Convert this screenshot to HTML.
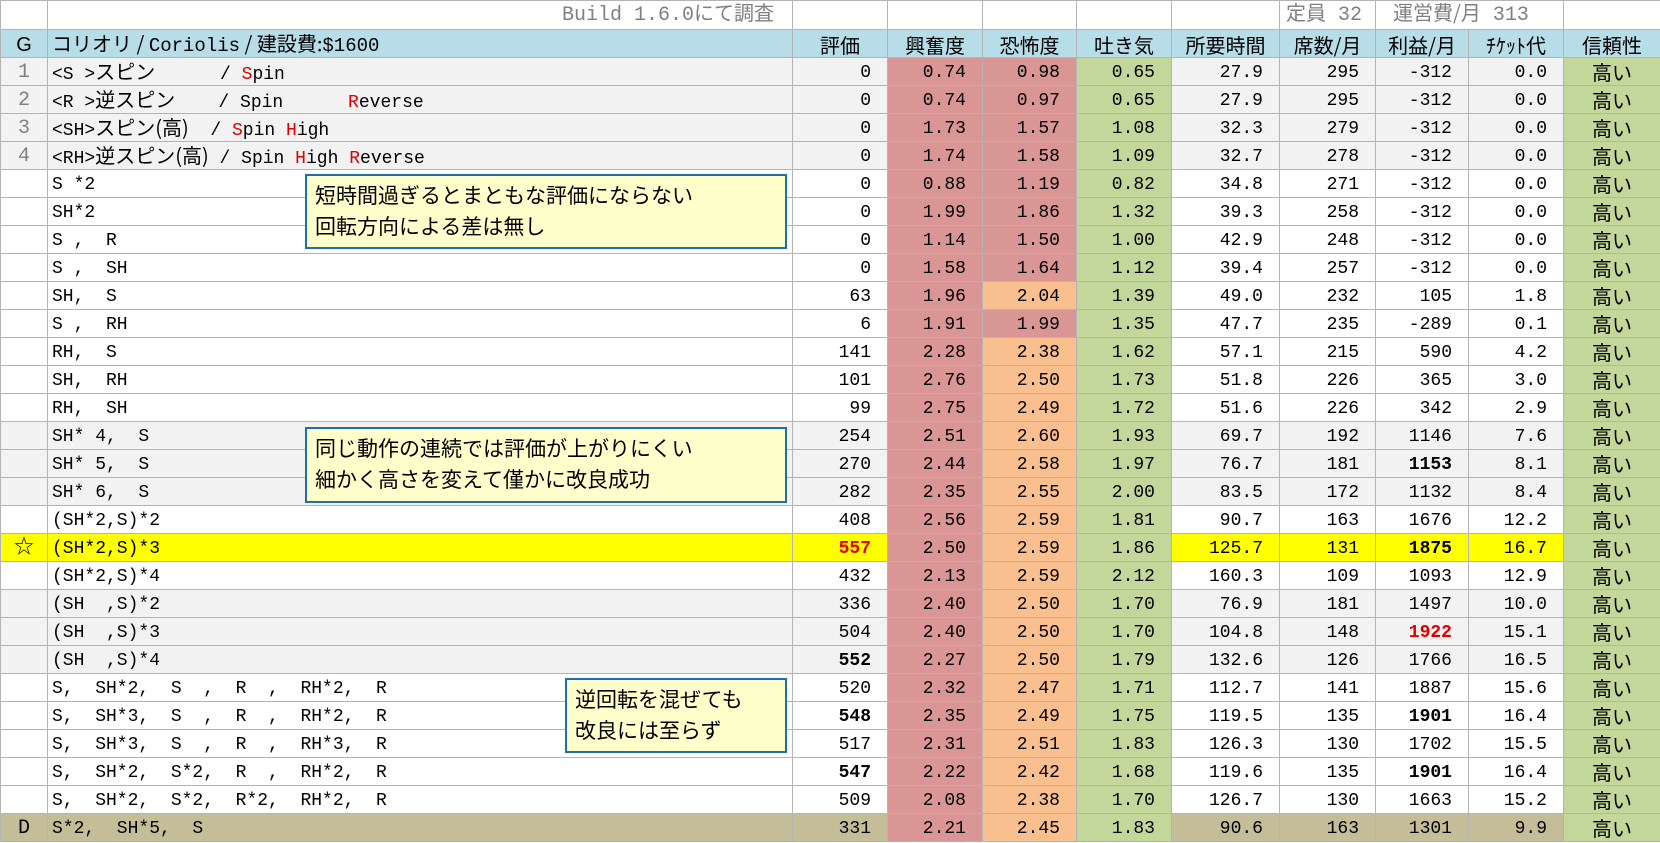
<!DOCTYPE html>
<html><head><meta charset="utf-8"><style>
*{margin:0;padding:0;box-sizing:border-box}
body{width:1660px;height:843px;background:#fff;overflow:hidden;position:relative;font-family:"Liberation Mono","Noto Sans CJK JP",monospace;font-size:18px;color:#000}
table{border-collapse:collapse;table-layout:fixed;position:absolute;left:0;top:0;width:1660px}
td{border:1px solid #b4b4b4;height:28px;white-space:pre;overflow:hidden;padding:3px 16px 0 0;line-height:20px;text-align:right;vertical-align:middle}
tr.h0 td{height:29px}
td.g{text-align:center;padding:2px 0 0 0;color:#808080;font-size:20px}
td.n{text-align:left;padding-left:4px;padding-right:0;overflow:visible}
.j{font-family:"Noto Sans CJK JP",sans-serif;font-size:20px;line-height:20px}
tr.hd td{background:#b7dde8;text-align:center;padding:2px 0 0 0;font-family:"Noto Sans CJK JP",sans-serif;font-size:20px}
tr.hd td.n{text-align:left;padding-left:4px}
tr.gr td{background:#f2f2f2}
tr.y td{background:#ffff00}
tr.d td{background:#c4bd97}
tr td.r{background:#da9694}
tr td.o{background:#fabf8f}
tr td.gn{background:#c4d79b}
tr td.rel{background:#c4d79b;text-align:center;padding:0;font-family:"Noto Sans CJK JP",sans-serif;font-size:20px}
.rd{color:#e00000}
b{font-weight:bold}
.note{position:absolute;background:#ffffcc;border:2px solid #1f6fa8;font-family:"Noto Sans CJK JP",sans-serif;font-size:21px;line-height:31px;padding:4px 0 0 8px;color:#000}
.gt{position:absolute;color:#808080;font-size:20px;top:2px;line-height:28px;white-space:pre}
</style></head><body>
<table>
<colgroup><col style="width:47px"><col style="width:745px"><col style="width:95px"><col style="width:95px"><col style="width:94px"><col style="width:95px"><col style="width:108px"><col style="width:96px"><col style="width:93px"><col style="width:95px"><col style="width:97px"></colgroup>
<tr class="h0"><td></td><td></td><td></td><td></td><td></td><td></td><td></td><td></td><td style="border-right:none"></td><td style="border-left:none"></td><td></td></tr>
<tr class="hd"><td style="font-family:'Liberation Sans',sans-serif">G</td><td class="n">コリオリ / <span style="font-family:'Liberation Mono',monospace;font-size:19px">Coriolis</span> / 建設費:<span style="font-family:'Liberation Mono',monospace;font-size:19px">$1600</span></td><td>評価</td><td>興奮度</td><td>恐怖度</td><td>吐き気</td><td>所要時間</td><td>席数/月</td><td>利益/月</td><td>ﾁｹｯﾄ代</td><td>信頼性</td></tr>
<tr class="gr"><td class="g">1</td><td class="n">&lt;S &gt;<span class="j">スピン</span>      / <span class="rd">S</span>pin</td><td>0</td><td class="r">0.74</td><td class="r">0.98</td><td class="gn">0.65</td><td>27.9</td><td>295</td><td>-312</td><td>0.0</td><td class="rel">高い</td></tr>
<tr class="gr"><td class="g">2</td><td class="n">&lt;R &gt;<span class="j">逆スピン</span>    / Spin      <span class="rd">R</span>everse</td><td>0</td><td class="r">0.74</td><td class="r">0.97</td><td class="gn">0.65</td><td>27.9</td><td>295</td><td>-312</td><td>0.0</td><td class="rel">高い</td></tr>
<tr class="gr"><td class="g">3</td><td class="n">&lt;SH&gt;<span class="j">スピン(高)</span>  / <span class="rd">S</span>pin <span class="rd">H</span>igh</td><td>0</td><td class="r">1.73</td><td class="r">1.57</td><td class="gn">1.08</td><td>32.3</td><td>279</td><td>-312</td><td>0.0</td><td class="rel">高い</td></tr>
<tr class="gr"><td class="g">4</td><td class="n">&lt;RH&gt;<span class="j">逆スピン(高)</span> / Spin <span class="rd">H</span>igh <span class="rd">R</span>everse</td><td>0</td><td class="r">1.74</td><td class="r">1.58</td><td class="gn">1.09</td><td>32.7</td><td>278</td><td>-312</td><td>0.0</td><td class="rel">高い</td></tr>
<tr><td class="g"></td><td class="n">S *2</td><td>0</td><td class="r">0.88</td><td class="r">1.19</td><td class="gn">0.82</td><td>34.8</td><td>271</td><td>-312</td><td>0.0</td><td class="rel">高い</td></tr>
<tr><td class="g"></td><td class="n">SH*2</td><td>0</td><td class="r">1.99</td><td class="r">1.86</td><td class="gn">1.32</td><td>39.3</td><td>258</td><td>-312</td><td>0.0</td><td class="rel">高い</td></tr>
<tr><td class="g"></td><td class="n">S ,  R</td><td>0</td><td class="r">1.14</td><td class="r">1.50</td><td class="gn">1.00</td><td>42.9</td><td>248</td><td>-312</td><td>0.0</td><td class="rel">高い</td></tr>
<tr><td class="g"></td><td class="n">S ,  SH</td><td>0</td><td class="r">1.58</td><td class="r">1.64</td><td class="gn">1.12</td><td>39.4</td><td>257</td><td>-312</td><td>0.0</td><td class="rel">高い</td></tr>
<tr><td class="g"></td><td class="n">SH,  S</td><td>63</td><td class="r">1.96</td><td class="o">2.04</td><td class="gn">1.39</td><td>49.0</td><td>232</td><td>105</td><td>1.8</td><td class="rel">高い</td></tr>
<tr><td class="g"></td><td class="n">S ,  RH</td><td>6</td><td class="r">1.91</td><td class="r">1.99</td><td class="gn">1.35</td><td>47.7</td><td>235</td><td>-289</td><td>0.1</td><td class="rel">高い</td></tr>
<tr><td class="g"></td><td class="n">RH,  S</td><td>141</td><td class="r">2.28</td><td class="o">2.38</td><td class="gn">1.62</td><td>57.1</td><td>215</td><td>590</td><td>4.2</td><td class="rel">高い</td></tr>
<tr><td class="g"></td><td class="n">SH,  RH</td><td>101</td><td class="r">2.76</td><td class="o">2.50</td><td class="gn">1.73</td><td>51.8</td><td>226</td><td>365</td><td>3.0</td><td class="rel">高い</td></tr>
<tr><td class="g"></td><td class="n">RH,  SH</td><td>99</td><td class="r">2.75</td><td class="o">2.49</td><td class="gn">1.72</td><td>51.6</td><td>226</td><td>342</td><td>2.9</td><td class="rel">高い</td></tr>
<tr class="gr"><td class="g"></td><td class="n">SH* 4,  S</td><td>254</td><td class="r">2.51</td><td class="o">2.60</td><td class="gn">1.93</td><td>69.7</td><td>192</td><td>1146</td><td>7.6</td><td class="rel">高い</td></tr>
<tr class="gr"><td class="g"></td><td class="n">SH* 5,  S</td><td>270</td><td class="r">2.44</td><td class="o">2.58</td><td class="gn">1.97</td><td>76.7</td><td>181</td><td><b>1153</b></td><td>8.1</td><td class="rel">高い</td></tr>
<tr class="gr"><td class="g"></td><td class="n">SH* 6,  S</td><td>282</td><td class="r">2.35</td><td class="o">2.55</td><td class="gn">2.00</td><td>83.5</td><td>172</td><td>1132</td><td>8.4</td><td class="rel">高い</td></tr>
<tr><td class="g"></td><td class="n">(SH*2,S)*2</td><td>408</td><td class="r">2.56</td><td class="o">2.59</td><td class="gn">1.81</td><td>90.7</td><td>163</td><td>1676</td><td>12.2</td><td class="rel">高い</td></tr>
<tr class="y"><td class="g" style="color:#000">☆</td><td class="n">(SH*2,S)*3</td><td><b class="rd">557</b></td><td class="r">2.50</td><td class="o">2.59</td><td class="gn">1.86</td><td>125.7</td><td>131</td><td><b>1875</b></td><td>16.7</td><td class="rel">高い</td></tr>
<tr><td class="g"></td><td class="n">(SH*2,S)*4</td><td>432</td><td class="r">2.13</td><td class="o">2.59</td><td class="gn">2.12</td><td>160.3</td><td>109</td><td>1093</td><td>12.9</td><td class="rel">高い</td></tr>
<tr class="gr"><td class="g"></td><td class="n">(SH  ,S)*2</td><td>336</td><td class="r">2.40</td><td class="o">2.50</td><td class="gn">1.70</td><td>76.9</td><td>181</td><td>1497</td><td>10.0</td><td class="rel">高い</td></tr>
<tr class="gr"><td class="g"></td><td class="n">(SH  ,S)*3</td><td>504</td><td class="r">2.40</td><td class="o">2.50</td><td class="gn">1.70</td><td>104.8</td><td>148</td><td><b class="rd">1922</b></td><td>15.1</td><td class="rel">高い</td></tr>
<tr class="gr"><td class="g"></td><td class="n">(SH  ,S)*4</td><td><b>552</b></td><td class="r">2.27</td><td class="o">2.50</td><td class="gn">1.79</td><td>132.6</td><td>126</td><td>1766</td><td>16.5</td><td class="rel">高い</td></tr>
<tr><td class="g"></td><td class="n">S,  SH*2,  S  ,  R  ,  RH*2,  R</td><td>520</td><td class="r">2.32</td><td class="o">2.47</td><td class="gn">1.71</td><td>112.7</td><td>141</td><td>1887</td><td>15.6</td><td class="rel">高い</td></tr>
<tr><td class="g"></td><td class="n">S,  SH*3,  S  ,  R  ,  RH*2,  R</td><td><b>548</b></td><td class="r">2.35</td><td class="o">2.49</td><td class="gn">1.75</td><td>119.5</td><td>135</td><td><b>1901</b></td><td>16.4</td><td class="rel">高い</td></tr>
<tr><td class="g"></td><td class="n">S,  SH*3,  S  ,  R  ,  RH*3,  R</td><td>517</td><td class="r">2.31</td><td class="o">2.51</td><td class="gn">1.83</td><td>126.3</td><td>130</td><td>1702</td><td>15.5</td><td class="rel">高い</td></tr>
<tr><td class="g"></td><td class="n">S,  SH*2,  S*2,  R  ,  RH*2,  R</td><td><b>547</b></td><td class="r">2.22</td><td class="o">2.42</td><td class="gn">1.68</td><td>119.6</td><td>135</td><td><b>1901</b></td><td>16.4</td><td class="rel">高い</td></tr>
<tr><td class="g"></td><td class="n">S,  SH*2,  S*2,  R*2,  RH*2,  R</td><td>509</td><td class="r">2.08</td><td class="o">2.38</td><td class="gn">1.70</td><td>126.7</td><td>130</td><td>1663</td><td>15.2</td><td class="rel">高い</td></tr>
<tr class="d"><td class="g" style="color:#000">D</td><td class="n">S*2,  SH*5,  S</td><td>331</td><td class="r">2.21</td><td class="o">2.45</td><td class="gn">1.83</td><td>90.6</td><td>163</td><td>1301</td><td>9.9</td><td class="rel">高い</td></tr>
</table>
<div class="gt" style="right:886px">Build 1.6.0<span class="j">にて調査</span></div>
<div class="gt" style="left:1286px"><span class="j">定員</span> 32</div>
<div class="gt" style="left:1393px"><span class="j">運営費/月</span> 313</div>
<div class="note" style="left:305px;top:174px;width:482px;height:75px">短時間過ぎるとまともな評価にならない<br>回転方向による差は無し</div>
<div class="note" style="left:305px;top:427px;width:482px;height:76px">同じ動作の連続では評価が上がりにくい<br>細かく高さを変えて僅かに改良成功</div>
<div class="note" style="left:565px;top:678px;width:222px;height:75px">逆回転を混ぜても<br>改良には至らず</div>
</body></html>
